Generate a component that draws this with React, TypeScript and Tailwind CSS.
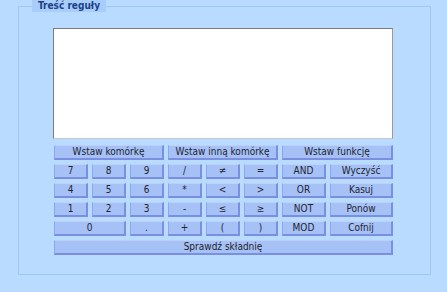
import React from "react";

const FONT = '"DejaVu Sans Condensed", "DejaVu Sans", Verdana, sans-serif';

const Btn = ({ label, span = 1 }: { label: string; span?: number }) => {
  const spanCls =
    span === 8 ? "col-span-8" : span === 3 ? "col-span-3" : span === 2 ? "col-span-2" : "";
  return (
    <button
      className={`${spanCls} h-[15px] flex items-center justify-center bg-[#a6c1f5] border-t border-l border-t-[#bcd0fa] border-l-[#8ea6ee] border-r-2 border-b-2 border-r-[#7a8fe2] border-b-[#7a8fe2] text-[10px] leading-none text-[#1e2430] p-0`}
      style={{ fontFamily: FONT }}
    >
      {label}
    </button>
  );
};

export default function App() {
  const rows: [string, number][][] = [
    [["Wstaw komórkę", 3], ["Wstaw inną komórkę", 3], ["Wstaw funkcję", 2]],
    [["7", 1], ["8", 1], ["9", 1], ["/", 1], ["≠", 1], ["=", 1], ["AND", 1], ["Wyczyść", 1]],
    [["4", 1], ["5", 1], ["6", 1], ["*", 1], ["<", 1], [">", 1], ["OR", 1], ["Kasuj", 1]],
    [["1", 1], ["2", 1], ["3", 1], ["-", 1], ["≤", 1], ["≥", 1], ["NOT", 1], ["Ponów", 1]],
    [["0", 2], [".", 1], ["+", 1], ["(", 1], [")", 1], ["MOD", 1], ["Cofnij", 1]],
    [["Sprawdź składnię", 8]],
  ];
  return (
    <div className="w-[447px] h-[292px] bg-[#b8dbff] pl-[18px] overflow-hidden">
      <fieldset className="w-[413px] border border-[#9fc8f0] pb-[19px]">
        <legend
          className="ml-[13px] px-[6px] h-[12px] leading-[12px] bg-[#a7cdf8] text-[10px] font-bold text-[#1c3f8c]"
          style={{ fontFamily: FONT }}
        >
          Treść reguły
        </legend>
        <div className="pl-[34px]">
          <div className="mt-[16px] w-[340px] h-[111px] bg-white border border-t-[#7c7c7c] border-l-[#7c7c7c] border-r-[#9a9a9a] border-b-[#c8c8c8]" />
          <div className="mt-[6px] ml-[1px] w-[339px] grid grid-cols-[34px_34px_34px_34px_34px_34px_44px_63px] gap-[4px]">
            {rows.flat().map(([l, s], i) => (
              <Btn key={i} label={l} span={s} />
            ))}
          </div>
        </div>
      </fieldset>
    </div>
  );
}
